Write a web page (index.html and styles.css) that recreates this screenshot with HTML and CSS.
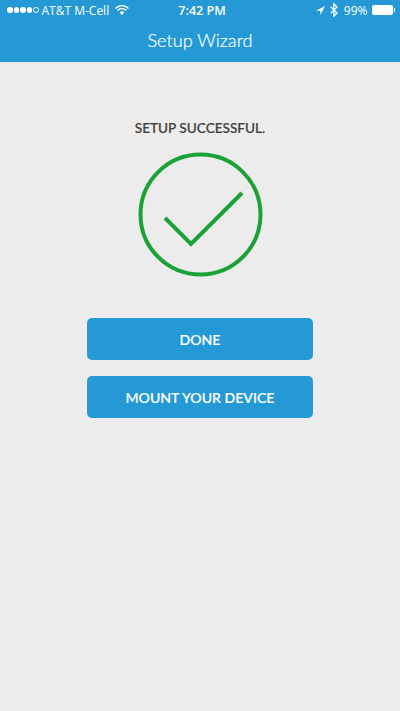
FILE: index.html
```html
<!DOCTYPE html>
<html>
<head>
    <meta charset="utf-8">
    <meta name="viewport" content="width=device-width, initial-scale=1">
    <title>Setup Wizard</title>
    <link rel="stylesheet" href="styles.css">
</head>

<body>
    <header class="app-header">
        <div class="status-bar">
            <div class="status-left">
                <span class="signal">
                    <i class="dot"></i><i class="dot"></i><i class="dot"></i><i class="dot"></i><i class="dot empty"></i>
                </span>
                <span class="carrier">AT&amp;T M-Cell</span>
                <svg class="wifi" width="14" height="10" viewBox="0 0 14 10">
                    <path d="M0.5 3.4a9 9 0 0 1 13 0" fill="none" stroke="#fff" stroke-width="1.4"/>
                    <path d="M2.6 5.5a6 6 0 0 1 8.8 0" fill="none" stroke="#fff" stroke-width="1.4"/>
                    <path d="M4.7 7.4a3 3 0 0 1 4.6 0L7 10z" fill="#fff"/>
                </svg>
            </div>
            <div class="status-time">7:42 PM</div>
            <div class="status-right">
                <svg class="location" width="9" height="9" viewBox="0 0 10 10">
                    <path d="M10 0L0 5.2h4.8V10z" fill="#fff"/>
                </svg>
                <svg class="bluetooth" width="8" height="14" viewBox="0 0 8 14">
                    <path d="M0.6 3.6L7 10l-3.2 3.2V0.8L7 4 0.6 10.4" fill="none" stroke="#fff" stroke-width="1.3"/>
                </svg>
                <span class="battery-pct">99%</span>
                <span class="battery"></span>
                <span class="battery-tip"></span>
            </div>
        </div>
        <h1 class="nav-title">Setup Wizard</h1>
    </header>

    <main class="content">
        <p class="message">SETUP SUCCESSFUL.</p>
        <svg class="check" width="124" height="124" viewBox="0 0 124 124">
            <circle cx="62.5" cy="61.5" r="60" fill="none" stroke="#1ba236" stroke-width="4"/>
            <path d="M27 65L53 91 104 40" fill="none" stroke="#1ba236" stroke-width="4"/>
        </svg>
        <div class="actions">
            <button type="button" class="action-btn">DONE</button>
            <button type="button" class="action-btn">MOUNT YOUR DEVICE</button>
        </div>
    </main>
</body>
</html>
```

FILE: styles.css
```css
/* Setup wizard result screen */
body {
    font-family: Lato, "Open Sans", sans-serif;
    margin: 0;
    padding: 0;
    height: 711px;
    overflow: hidden;
    background-color: #ececec;
}
.app-header {
    height: 62px;
    background-color: #2499d6;
    color: #fff;
}
.status-bar {
    display: grid;
    grid-template-columns: 1fr auto 1fr;
    align-items: center;
    height: 20px;
    padding: 0 5px 0 7px;
    font-family: "Open Sans", sans-serif;
    font-size: 12px;
}
.status-left,
.status-right {
    display: flex;
    align-items: center;
}
.status-right {
    justify-content: flex-end;
}
.signal {
    display: flex;
    gap: 1px;
    margin-right: 3px;
}
.dot {
    width: 5.5px;
    height: 5.5px;
    border-radius: 50%;
    background-color: #fff;
}
.dot.empty {
    box-sizing: border-box;
    background-color: transparent;
    border: 1px solid #fff;
}
.wifi {
    margin-left: 6px;
}
.status-time {
    font-weight: 600;
    font-size: 12.5px;
    margin-left: 2px;
}
.location {
    margin-right: 5px;
}
.bluetooth {
    margin-right: 6px;
}
.battery-pct {
    margin-right: 4px;
}
.battery {
    width: 21px;
    height: 10px;
    border-radius: 2px;
    background-color: #fff;
}
.battery-tip {
    width: 1.5px;
    height: 4px;
    margin-left: 1px;
    background-color: #fff;
}
.nav-title {
    margin: 0;
    height: 42px;
    line-height: 41px;
    text-align: center;
    font-size: 18.2px;
    font-weight: 300;
    -webkit-text-stroke: 0.2px #fff;
}
.content {
    display: flex;
    flex-direction: column;
    align-items: center;
}
.message {
    margin: 58px 0 0;
    height: 17px;
    line-height: 17px;
    font-size: 13.6px;
    font-weight: 500;
    color: #3f3f3f;
    -webkit-text-stroke: 0.2px #3f3f3f;
}
.check {
    display: block;
    margin-top: 16px;
    overflow: visible;
}
.actions {
    display: flex;
    flex-direction: column;
    gap: 16px;
    margin-top: 41px;
}
.action-btn {
    width: 226px;
    height: 42px;
    padding: 0;
    border: none;
    border-radius: 5px;
    background-color: #2499d6;
    color: #fff;
    font-family: Lato, "Open Sans", sans-serif;
    font-size: 14.1px;
    font-weight: 500;
    -webkit-text-stroke: 0.2px #fff;
}
```
